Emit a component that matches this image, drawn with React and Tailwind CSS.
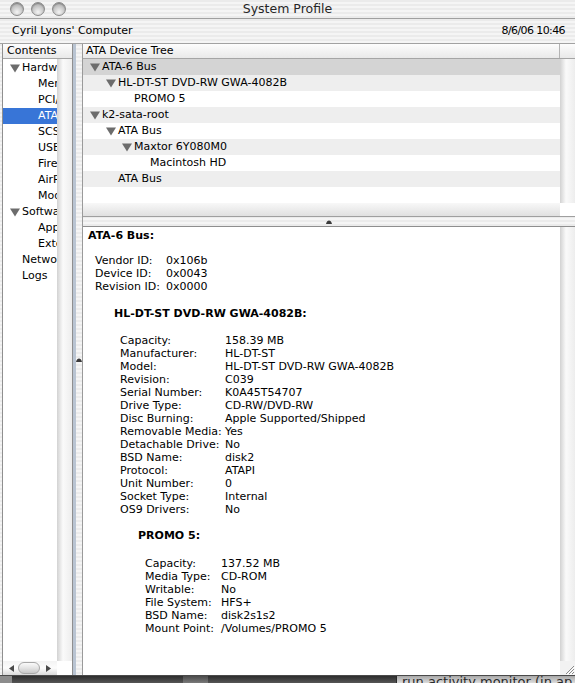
import React from "react";

const sans = "font-['DejaVu_Sans','Liberation_Sans',sans-serif]";
const stripes =
  "bg-[image:repeating-linear-gradient(180deg,#ebebeb_0px,#ebebeb_2px,#f5f5f5_2px,#f5f5f5_4px)]";
const vtrack = "bg-gradient-to-r from-[#d2d2d2] via-[#fafafa] via-40% to-[#ededed]";
const header = "bg-gradient-to-b from-[#fdfdfd] to-[#e9e9e9]";

const contents = [
  { label: "Hardware", level: 0, open: true },
  { label: "Memory", level: 1 },
  { label: "PCI/AGP Cards", level: 1 },
  { label: "ATA", level: 1, selected: true },
  { label: "SCSI", level: 1 },
  { label: "USB", level: 1 },
  { label: "FireWire", level: 1 },
  { label: "AirPort Card", level: 1 },
  { label: "Modems", level: 1 },
  { label: "Software", level: 0, open: true },
  { label: "Applications", level: 1 },
  { label: "Extensions", level: 1 },
  { label: "Network", level: 0 },
  { label: "Logs", level: 0 },
];

const tree = [
  { label: "ATA-6 Bus", level: 0, open: true },
  { label: "HL-DT-ST DVD-RW GWA-4082B", level: 1, open: true },
  { label: "PROMO 5", level: 2 },
  { label: "k2-sata-root", level: 0, open: true },
  { label: "ATA Bus", level: 1, open: true },
  { label: "Maxtor 6Y080M0", level: 2, open: true },
  { label: "Macintosh HD", level: 3 },
  { label: "ATA Bus", level: 1 },
];
const treeIndent = ["pl-[7px]", "pl-[23px]", "pl-[39px]", "pl-[55px]"];

const busInfo = [
  ["Vendor ID:", "0x106b"],
  ["Device ID:", "0x0043"],
  ["Revision ID:", "0x0000"],
];

const driveInfo = [
  ["Capacity:", "158.39 MB"],
  ["Manufacturer:", "HL-DT-ST"],
  ["Model:", "HL-DT-ST DVD-RW GWA-4082B"],
  ["Revision:", "C039"],
  ["Serial Number:", "K0A45T54707"],
  ["Drive Type:", "CD-RW/DVD-RW"],
  ["Disc Burning:", "Apple Supported/Shipped"],
  ["Removable Media:", "Yes"],
  ["Detachable Drive:", "No"],
  ["BSD Name:", "disk2"],
  ["Protocol:", "ATAPI"],
  ["Unit Number:", "0"],
  ["Socket Type:", "Internal"],
  ["OS9 Drivers:", "No"],
];

const volumeInfo = [
  ["Capacity:", "137.52 MB"],
  ["Media Type:", "CD-ROM"],
  ["Writable:", "No"],
  ["File System:", "HFS+"],
  ["BSD Name:", "disk2s1s2"],
  ["Mount Point:", "/Volumes/PROMO 5"],
];

function Triangle() {
  return (
    <svg width="10" height="9" viewBox="0 0 10 9" className="shrink-0">
      <path d="M0 0.5H10L5 8.5Z" fill="#6c6c6c" />
    </svg>
  );
}

function Dimple() {
  return (
    <svg width="6" height="4" viewBox="0 0 6 4">
      <path d="M0 4C0.5 1.5 1.8 0.5 3 0.5S5.5 1.5 6 4Z" fill="#3a3a3a" />
    </svg>
  );
}

function Light() {
  return (
    <div className="h-[14px] w-[14px] rounded-full border border-[#8a8a8a] bg-[radial-gradient(circle_at_50%_75%,#f4f4f4_0%,#c4c4c4_55%,#9d9d9d_100%)] shadow-[inset_0_1px_1px_rgba(0,0,0,0.25)]" />
  );
}

function Props({ rows, cols, className }) {
  return (
    <div className={`grid ${cols} leading-[13px] ${className}`}>
      {rows.map(([k, v]) => (
        <React.Fragment key={k}>
          <span className="whitespace-nowrap">{k}</span>
          <span className="whitespace-nowrap">{v}</span>
        </React.Fragment>
      ))}
    </div>
  );
}

export default function App() {
  return (
    <div className={`relative h-[683px] w-[575px] overflow-hidden bg-[#3d3d3d] text-[11px] text-black ${sans}`}>
      <div className="flex h-[676px] flex-col border-b border-[#4a4a4a]">
        {/* title bar */}
        <div className={`grid h-[19px] shrink-0 grid-cols-[1fr_auto_1fr] items-center border-b border-[#a0a0a0] ${stripes}`}>
          <div className="flex gap-[7px] pl-[10px]">
            <Light />
            <Light />
            <Light />
          </div>
          <span className="text-[12.5px] leading-none text-[#262626]">System Profile</span>
          <div />
        </div>

        {/* computer / date strip */}
        <div className={`flex h-[25px] shrink-0 items-center justify-between border-b border-[#a2a2a2] pl-[12px] pr-[10px] pt-[1px] ${stripes}`}>
          <span>Cyril Lyons' Computer</span>
          <span className="tracking-[-0.6px]">8/6/06 10:46</span>
        </div>

        {/* body */}
        <div className={`flex min-h-0 flex-1 pl-[2px] ${stripes}`}>
          {/* contents pane */}
          <div className="flex w-[71px] flex-col border-x border-[#8f8f8f] bg-white">
            <div className={`h-[15px] shrink-0 border-b border-[#a5a5a5] pl-[4px] leading-[14px] ${header}`}>Contents</div>
            <div className="flex min-h-0 flex-1">
              <div className="w-[54px] overflow-hidden pt-[1px]">
                {contents.map((c) => (
                  <div
                    key={c.label}
                    className={`flex h-4 items-center whitespace-nowrap ${c.selected ? "bg-[#3875d7] text-white" : ""} ${
                      c.level === 1 ? "pl-[35px]" : c.open ? "pl-[7px]" : "pl-[19px]"
                    }`}
                  >
                    {c.open && (
                      <span className="mr-[2px] flex">
                        <Triangle />
                      </span>
                    )}
                    <span>{c.label}</span>
                  </div>
                ))}
              </div>
              <div className={`w-[15px] ${vtrack}`} />
            </div>
            <div className="flex h-[14px] shrink-0">
              <div className="flex w-[54px] items-center bg-gradient-to-b from-[#f3f3f3] via-[#fdfdfd] to-[#d9d9d9] pl-[6px]">
                <svg width="5" height="7" viewBox="0 0 5 7">
                  <path d="M5 0V7L0 3.5Z" fill="#4a4a4a" />
                </svg>
                <div className="ml-[4px] h-[12px] w-[22px] rounded-full border border-[#a8a8a8] bg-gradient-to-b from-[#fafafa] via-[#e4e4e4] to-[#c8c8c8]" />
                <svg width="5" height="7" viewBox="0 0 5 7" className="ml-[6px]">
                  <path d="M0 0V7L5 3.5Z" fill="#4a4a4a" />
                </svg>
              </div>
              <div className="w-[15px] bg-white" />
            </div>
          </div>

          {/* vertical splitter */}
          <div className="flex w-[9px] shrink-0">
            <div className="w-[3px] bg-[#b9c4d2]" />
            <div className="flex flex-1 items-center justify-center">
              <Dimple />
            </div>
          </div>

          {/* right pane */}
          <div className="flex min-w-0 flex-1 flex-col border-l border-[#9a9a9a]">
            <div className={`flex h-[15px] shrink-0 border-b border-[#a5a5a5] leading-[14px] ${header}`}>
              <div className="w-[477px] border-r border-[#b3b3b3] pl-[3px]">ATA Device Tree</div>
              <div className="flex-1" />
            </div>

            <div className="flex h-[144px] shrink-0">
              <div className="flex-1 bg-white">
                {tree.map((t, i) => (
                  <div
                    key={i}
                    className={`flex h-4 items-center whitespace-nowrap ${treeIndent[t.level]} ${
                      i === 0 ? "bg-[#d4d4d4]" : i % 2 === 1 ? "bg-[#eeeeee]" : "bg-white"
                    }`}
                  >
                    {t.open ? (
                      <span className="mr-[2px] flex">
                        <Triangle />
                      </span>
                    ) : (
                      <span className="w-[12px] shrink-0" />
                    )}
                    <span>{t.label}</span>
                  </div>
                ))}
              </div>
              <div className={`w-[15px] ${vtrack}`} />
            </div>

            <div className="flex h-[14px] shrink-0 border-b border-[#9f9f9f]">
              <div className="flex-1 bg-gradient-to-b from-[#f8f8f8] to-[#e0e0e0]" />
              <div className="w-[15px] bg-white" />
            </div>

            <div className="flex h-[9px] shrink-0 items-center justify-center">
              <Dimple />
            </div>

            {/* details */}
            <div className="flex min-h-0 flex-1 border-t border-[#8e8e8e]">
              <div className="flex-1 overflow-hidden bg-white pt-[2px]">
                <div className="ml-[5px] font-bold leading-[13px]">ATA-6 Bus:</div>
                <Props rows={busInfo} cols="grid-cols-[71px_auto]" className="ml-[12px] mt-[12px]" />
                <div className="ml-[31px] mt-[14px] font-bold leading-[13px]">HL-DT-ST DVD-RW GWA-4082B:</div>
                <Props rows={driveInfo} cols="grid-cols-[105px_auto]" className="ml-[37px] mt-[14px]" />
                <div className="ml-[55px] mt-[13px] font-bold leading-[13px]">PROMO 5:</div>
                <Props rows={volumeInfo} cols="grid-cols-[76px_auto]" className="ml-[62px] mt-[15px]" />
              </div>
              <div className="flex w-[15px] flex-col">
                <div className={`flex-1 ${vtrack}`} />
                <div className="flex h-[14px] items-end justify-end bg-[#f2f2f2]">
                  <svg width="12" height="12" viewBox="0 0 12 12">
                    <path d="M11 3L3 11M11 6L6 11M11 9L9 11" stroke="#8a8a8a" strokeWidth="1" />
                    <path d="M12 4L4 12M12 7L7 12M12 10L10 12" stroke="#ffffff" strokeWidth="1" />
                  </svg>
                </div>
              </div>
            </div>
          </div>
        </div>
      </div>

      {/* desktop below the window */}
      <div className="flex h-[7px]">
        <div className="w-[12px] bg-[#8c8c8c]" />
        <div className="w-[171px] bg-gradient-to-b from-[#2e2e2e] to-[#565656]" />
        <div className="w-[25px] bg-gradient-to-b from-[#4a4a4a] to-[#7a7a7a]" />
        <div className="w-[188px] bg-gradient-to-b from-[#2e2e2e] to-[#565656]" />
        <div className="flex-1 overflow-hidden border-l border-[#2a2a2a] bg-gradient-to-b from-[#a8a8a8] to-[#dcdcdc]">
          <p className="-mt-[1px] ml-[5px] whitespace-nowrap text-[13px] leading-none text-[#2a2a2a]">run activity monitor (in ap</p>
        </div>
      </div>
    </div>
  );
}
